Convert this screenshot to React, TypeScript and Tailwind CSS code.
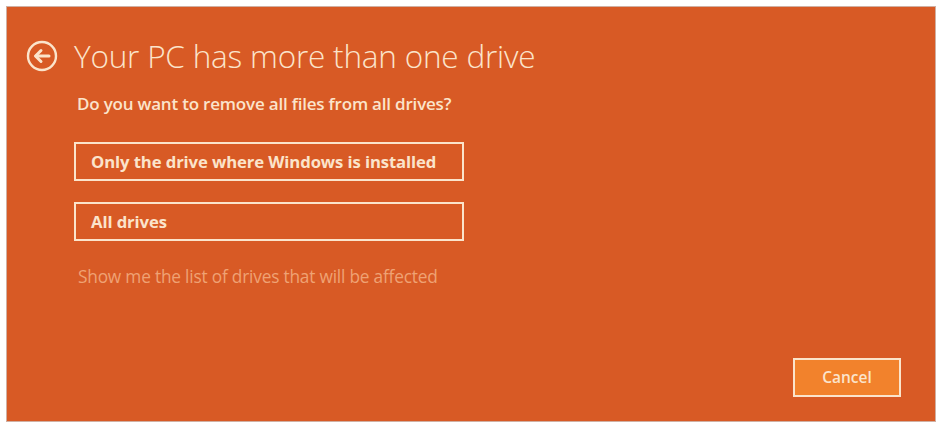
import React from "react";

function BackArrow() {
  return (
    <svg width="32" height="32" viewBox="0 0 32 32" fill="none">
      <circle cx="16" cy="16" r="14" stroke="#FBE4CB" strokeWidth="2.4" />
      <path d="M23 16H10" stroke="#FBE4CB" strokeWidth="3" strokeLinecap="round" />
      <path d="M15 10.5L9.5 16L15 21.5" stroke="#FBE4CB" strokeWidth="3" strokeLinecap="round" strokeLinejoin="round" />
    </svg>
  );
}

function Choice({ label }: { label: string }) {
  return (
    <button className="w-[390px] h-[39px] border-[2.5px] border-[#FBE4CB] flex items-center pl-[15px] text-left text-[16.7px] font-bold text-[#FBE4CB] tracking-[-0.1px]">
      {label}
    </button>
  );
}

export default function App() {
  return (
    <div
      className="w-[940px] h-[426px] bg-white pt-[7px] pl-[7px] pr-[5px] pb-[5px]"
      style={{ fontFamily: '"Open Sans", "Noto Sans", "Liberation Sans", sans-serif' }}
    >
      <div className="h-full flex flex-col bg-[#D85A25] shadow-[0_0_0_1px_rgba(150,80,50,0.45)]">
        <div className="flex items-center pt-[29px] pl-[19px] gap-[16px]">
          <BackArrow />
          <h1 className="text-[31.5px] font-light text-[#FBE4CB] leading-[40px] tracking-[-0.2px]">
            Your PC has more than one drive
          </h1>
        </div>
        <div className="pl-[67px] flex flex-col">
          <p className="mt-[17px] ml-[3px] text-[17px] font-semibold text-[#FBE4CB] leading-[22px] tracking-[-0.2px]">
            Do you want to remove all files from all drives?
          </p>
          <div className="mt-[27px] flex flex-col gap-[21px]">
            <Choice label="Only the drive where Windows is installed" />
            <Choice label="All drives" />
          </div>
          <p className="mt-[25px] ml-[4px] text-[17.3px] text-[#EFA274] leading-[22px] tracking-[-0.2px]">
            Show me the list of drives that will be affected
          </p>
        </div>
        <div className="mt-auto flex justify-end pr-[34px] pb-[24px]">
          <button className="w-[108px] h-[39px] bg-[#F2822C] border-[2.5px] border-[#FBE4CB] text-[15.5px] font-semibold text-[#FBE4CB]">
            Cancel
          </button>
        </div>
      </div>
    </div>
  );
}
